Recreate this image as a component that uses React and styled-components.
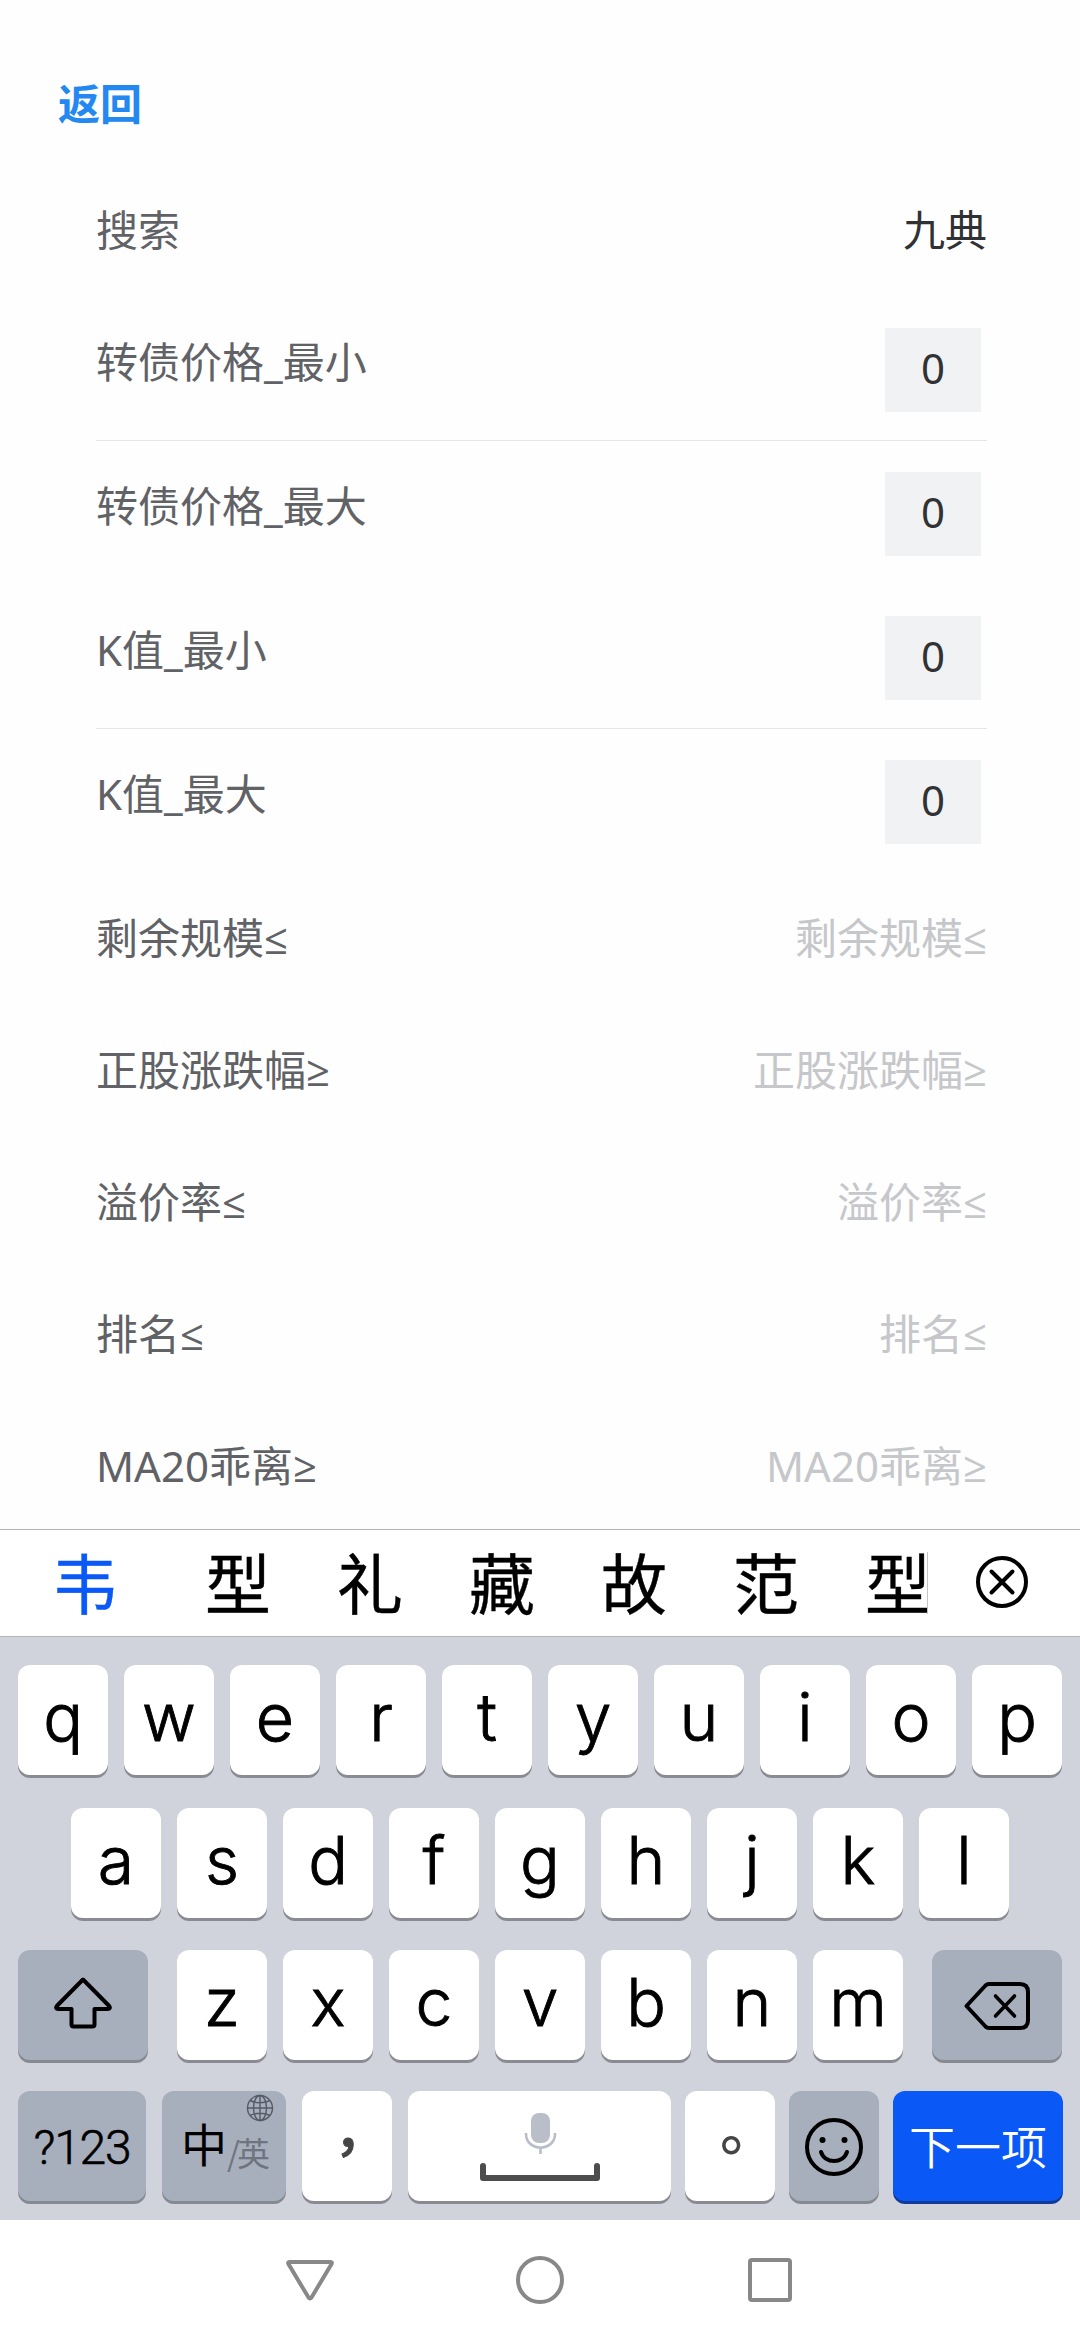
import React from 'react';
import styled, { createGlobalStyle } from 'styled-components';

const fields = [
  { label: '搜索', value: '九典' },
  { label: '转债价格_最小', number: 0 },
  { label: '转债价格_最大', number: 0, line: true },
  { label: 'K值_最小', number: 0 },
  { label: 'K值_最大', number: 0, line: true },
  { label: '剩余规模≤', placeholder: '剩余规模≤' },
  { label: '正股涨跌幅≥', placeholder: '正股涨跌幅≥' },
  { label: '溢价率≤', placeholder: '溢价率≤' },
  { label: '排名≤', placeholder: '排名≤' },
  { label: 'MA20乖离≥', placeholder: 'MA20乖离≥' },
];

const candidates = ['型', '礼', '藏', '故', '范', '型'];

const App = () => {
  return (
    <StyledScreen>
      <GlobalStyle />
      <StyledHeader>
        <StyledBack>返回</StyledBack>
      </StyledHeader>
      <StyledForm>
        {fields.map((field) => (
          <Field key={field.label} {...field} />
        ))}
      </StyledForm>
      <CandidateBar />
      <Keyboard />
      <NavBar />
    </StyledScreen>
  );
};

const Field = ({ label, value, number, placeholder, line }) => {
  const hasNumber = number !== undefined;
  return (
    <StyledField $tall={hasNumber} $line={line}>
      <StyledLabel>{label}</StyledLabel>
      {hasNumber && <StyledNumber>{number}</StyledNumber>}
      {value && <StyledValue>{value}</StyledValue>}
      {placeholder && <StyledValue $muted>{placeholder}</StyledValue>}
    </StyledField>
  );
};

const CandidateBar = () => {
  return (
    <StyledCandidates>
      <StyledCandidate $active>韦</StyledCandidate>
      <StyledCandidateList>
        {candidates.map((word, i) => (
          <StyledCandidate key={i}>{word}</StyledCandidate>
        ))}
      </StyledCandidateList>
      <StyledDivider />
      <StyledClear>
        <svg width="54" height="54" viewBox="0 0 54 54">
          <circle cx="27" cy="27" r="24" />
          <path d="M16.5 16.5l21 21M37.5 16.5l-21 21" />
        </svg>
      </StyledClear>
    </StyledCandidates>
  );
};

const Keyboard = () => {
  return (
    <StyledKeyboard>
      <StyledKeyRow $height={143}>
        {[...'qwertyuiop'].map((letter) => (
          <StyledKey key={letter}>{letter}</StyledKey>
        ))}
      </StyledKeyRow>
      <StyledKeyRow $height={142}>
        {[...'asdfghjkl'].map((letter) => (
          <StyledKey key={letter}>{letter}</StyledKey>
        ))}
      </StyledKeyRow>
      <StyledKeyRow $height={141} $spread>
        <StyledKey $tone="dark" $width={130}>
          <StyledIcon $up={6} width="60" height="54" viewBox="0 0 60 54">
            <path d="M30 4.5L3.8 31c-1.4 1.6-.6 3 1.4 3H18.5V49.5q0 2 2 2h19q2 0 2-2V34h13.3c2 0 2.8-1.4 1.4-3z" />
          </StyledIcon>
        </StyledKey>
        <StyledLetters>
          {[...'zxcvbnm'].map((letter) => (
            <StyledKey key={letter}>{letter}</StyledKey>
          ))}
        </StyledLetters>
        <StyledKey $tone="dark" $width={130} $gap={0}>
          <StyledIcon $up={-2} width="70" height="52" viewBox="0 0 70 52">
            <path d="M4.5 26L23.5 5.5q1.5-1.5 3.5-1.5H58q8 0 8 8V40q0 8-8 8H27q-2 0-3.5-1.5z" />
            <path d="M33.5 16l19 20M52.5 16l-19 20" strokeWidth="3.6" />
          </StyledIcon>
        </StyledKey>
      </StyledKeyRow>
      <StyledKeyRow $height={129} $spread>
        <StyledKey $tone="dark" $width={128}>
          <StyledSymbols>?123</StyledSymbols>
        </StyledKey>
        <StyledKey $tone="dark" $width={124}>
          <StyledLanguage>
            中<small>/</small>
            <small>英</small>
          </StyledLanguage>
          <StyledGlobe width="28" height="28" viewBox="0 0 28 28">
            <circle cx="14" cy="14" r="12.5" />
            <ellipse cx="14" cy="14" rx="6.5" ry="12.5" />
            <path d="M14 1.5v25M1.5 14h25M4 6.5q10 4.5 20 0M4 21.5q10-4.5 20 0" />
          </StyledGlobe>
        </StyledKey>
        <StyledKey>
          <StyledComma>，</StyledComma>
        </StyledKey>
        <StyledKey $width={263}>
          <svg width="124" height="72" viewBox="0 0 124 72">
            <rect x="53" y="3" width="19" height="30" rx="8" fill="#b9bec9" />
            <path
              d="M48 23v1c0 18 29 18 29 0v-1M62.5 38v6"
              fill="none"
              stroke="#b9bec9"
              strokeWidth="2.6"
            />
            <path
              d="M5 56v12H119V56"
              fill="none"
              stroke="#4d4d4d"
              strokeWidth="6"
              strokeLinecap="round"
              strokeLinejoin="round"
            />
          </svg>
        </StyledKey>
        <StyledKey $gap={14}>
          <StyledStop>。</StyledStop>
        </StyledKey>
        <StyledKey $tone="dark" $gap={14}>
          <StyledIcon $up={-1} width="60" height="60" viewBox="0 0 60 60">
            <circle cx="30" cy="30" r="27" />
            <path d="M17 35c4 12 22 12 26 0" />
            <circle cx="18.5" cy="23" r="3" fill="#000" stroke="none" />
            <circle cx="40.5" cy="23" r="3" fill="#000" stroke="none" />
          </StyledIcon>
        </StyledKey>
        <StyledKey $tone="blue" $width={170} $gap={14}>
          <StyledNext>下一项</StyledNext>
        </StyledKey>
      </StyledKeyRow>
    </StyledKeyboard>
  );
};

const NavBar = () => {
  return (
    <StyledNav>
      <svg width="50" height="50" viewBox="0 0 50 50">
        <path d="M4.5 7h41q2 0 1 2L26.5 42.5q-1.5 2-3 0L3.5 9q-1-2 1-2z" />
      </svg>
      <svg width="50" height="50" viewBox="0 0 50 50">
        <circle cx="25" cy="25" r="22" />
      </svg>
      <svg width="50" height="50" viewBox="0 0 50 50">
        <rect x="5" y="5" width="40" height="40" rx="2" />
      </svg>
    </StyledNav>
  );
};

const tones = {
  light: { face: '#ffffff', edge: '#8a8b92' },
  dark: { face: '#a8afbc', edge: '#858991' },
  blue: { face: '#0a59f7', edge: '#123b96' },
};

const GlobalStyle = createGlobalStyle`
  * {
    margin: 0;
    padding: 0;
    box-sizing: border-box;
  }
  body {
    background: #fefefe;
    font-family: 'Noto Sans', 'Open Sans', 'Noto Sans CJK SC', sans-serif;
  }
  svg {
    display: block;
    flex: none;
  }
`;

const StyledScreen = styled.div`
  display: flex;
  flex-direction: column;
  width: 1080px;
  height: 2340px;
  overflow: hidden;
`;

const StyledHeader = styled.header`
  display: flex;
  align-items: flex-end;
  height: 164px;
  padding: 0 58px 30px;
`;

const StyledBack = styled.h1`
  color: #2388f0;
  font-size: 42px;
  line-height: 60px;
  font-weight: bold;
`;

const StyledForm = styled.main`
  height: 1365px;
  padding: 0 93px 0 96px;
`;

const StyledField = styled.div`
  display: flex;
  justify-content: space-between;
  height: ${({ $tall }) => ($tall ? 144 : 132)}px;
  box-shadow: ${({ $line }) => ($line ? 'inset 0 1px 0 #e6e6e6' : 'none')};
  font-size: 42px;
  line-height: 132px;
`;

const StyledLabel = styled.label`
  color: #606266;
  white-space: nowrap;
`;

const StyledValue = styled.span`
  color: ${({ $muted }) => ($muted ? '#c6c7ca' : '#303133')};
  white-space: nowrap;
`;

const StyledNumber = styled.span`
  width: 96px;
  height: 84px;
  margin: 32px 6px 0 0;
  background: #f1f2f4;
  color: #323233;
  line-height: 80px;
  text-align: center;
`;

const StyledCandidates = styled.div`
  display: flex;
  align-items: center;
  height: 108px;
  padding-left: 52px;
  background: #ffffff;
  border-top: 1px solid #b4b5b9;
  border-bottom: 1px solid #b4b5b9;
`;

const StyledCandidateList = styled.div`
  display: flex;
  gap: 66px;
  margin-left: 87px;
`;

const StyledCandidate = styled.span`
  flex: none;
  width: 66px;
  padding-bottom: 6px;
  color: ${({ $active }) => ($active ? '#0a59f7' : '#000000')};
  font-family: 'Noto Sans CJK SC', sans-serif;
  font-size: 66px;
  line-height: 100px;
  -webkit-text-stroke: 0.4px currentColor;
`;

const StyledDivider = styled.div`
  width: 1px;
  height: 62px;
  margin-left: -4px;
  background: #c4c4c4;
`;

const StyledClear = styled.button`
  margin: 0 0 2px 47px;
  background: none;
  border: none;
  svg {
    fill: none;
    stroke: #000000;
    stroke-width: 4;
    stroke-linecap: round;
  }
`;

const StyledKeyboard = styled.section`
  height: 583px;
  padding-top: 28px;
  background: #d0d3dc;
`;

const StyledKeyRow = styled.div`
  display: flex;
  justify-content: ${({ $spread }) => ($spread ? 'space-between' : 'center')};
  height: ${({ $height }) => $height}px;
  padding: 0 18px;
`;

const StyledLetters = styled.div`
  display: flex;
`;

const StyledKey = styled.button`
  position: relative;
  display: flex;
  flex: none;
  align-items: center;
  justify-content: center;
  width: ${({ $width = 90 }) => $width}px;
  height: 110px;
  margin-left: ${({ $gap = 16 }) => $gap}px;
  padding-bottom: 6px;
  background: ${({ $tone = 'light' }) => tones[$tone].face};
  border: none;
  border-radius: 12px;
  box-shadow: 0 3px 0 ${({ $tone = 'light' }) => tones[$tone].edge};
  color: #000000;
  font-family: Inter, sans-serif;
  font-size: 66px;
  font-weight: 300;
  line-height: 104px;
  -webkit-text-stroke: 0.9px currentColor;
  &:first-child {
    margin-left: 0;
  }
  svg {
    transform: translateY(3px);
  }
`;

const StyledIcon = styled.svg`
  margin-bottom: ${({ $up }) => $up}px;
  fill: none;
  stroke: #000000;
  stroke-width: 4;
  stroke-linecap: round;
  stroke-linejoin: round;
`;

const StyledSymbols = styled.span`
  padding-top: 10px;
  font-family: Roboto, sans-serif;
  font-size: 48px;
  letter-spacing: -1.2px;
  -webkit-text-stroke: 0.6px currentColor;
`;

const StyledLanguage = styled.span`
  padding-top: 7px;
  font-family: 'Noto Sans CJK SC', sans-serif;
  font-size: 46px;
  font-weight: 400;
  white-space: nowrap;
  -webkit-text-stroke: 0;
  small {
    color: #6f7580;
    font-size: 33px;
    letter-spacing: -3px;
    vertical-align: -4px;
  }
`;

const StyledGlobe = styled.svg`
  position: absolute;
  top: 0;
  right: 12px;
  fill: none;
  stroke: #555b66;
  stroke-width: 1.4;
`;

const StyledComma = styled.span`
  padding: 0 0 30px 28px;
  color: #454545;
  font-family: 'Noto Sans CJK SC', sans-serif;
  font-size: 54px;
  font-weight: 500;
  line-height: 60px;
`;

const StyledStop = styled.span`
  padding: 0 0 36px 38px;
  color: #454545;
  font-family: 'Noto Sans CJK SC', sans-serif;
  font-size: 58px;
  font-weight: 500;
  line-height: 60px;
  -webkit-text-stroke: 0;
`;

const StyledNext = styled.span`
  padding-top: 2px;
  color: #ffffff;
  font-family: 'Noto Sans CJK SC', sans-serif;
  font-size: 46px;
  font-weight: 350;
  -webkit-text-stroke: 0;
`;

const StyledNav = styled.nav`
  display: flex;
  align-items: center;
  justify-content: center;
  gap: 180px;
  height: 120px;
  background: #ffffff;
  svg {
    fill: none;
    stroke: #888888;
    stroke-width: 4;
  }
`;

export default App;
